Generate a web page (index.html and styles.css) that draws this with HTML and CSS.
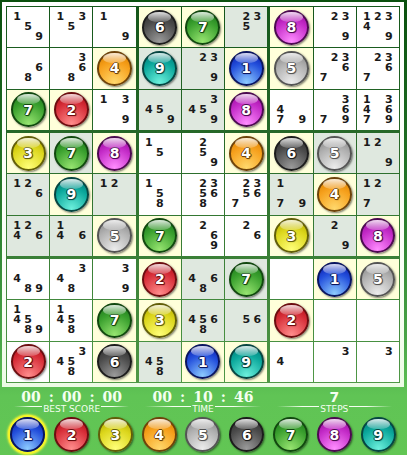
FILE: index.html
```html
<!DOCTYPE html>
<html lang="en">
<head>
<meta charset="utf-8">
<meta name="viewport" content="width=device-width, initial-scale=1">
<title>Sudoku</title>
<link rel="stylesheet" href="styles.css">
</head>
<body>
<main class="game">
  <section class="frame">
    <div class="board" id="board"></div>
  </section>
  <footer class="panel">
    <div class="stats">
      <div class="stat">
        <div class="value"><span>00</span><span>:</span><span>00</span><span>:</span><span>00</span></div>
        <div class="caption">BEST SCORE</div>
      </div>
      <div class="stat">
        <div class="value"><span>00</span><span>:</span><span>10</span><span>:</span><span>46</span></div>
        <div class="caption">TIME</div>
      </div>
      <div class="stat">
        <div class="value plain">7</div>
        <div class="caption">STEPS</div>
      </div>
    </div>
    <div class="picker">
      <button type="button" class="ball n1 selected">1</button>
      <button type="button" class="ball n2">2</button>
      <button type="button" class="ball n3">3</button>
      <button type="button" class="ball n4">4</button>
      <button type="button" class="ball n5">5</button>
      <button type="button" class="ball n6">6</button>
      <button type="button" class="ball n7">7</button>
      <button type="button" class="ball n8">8</button>
      <button type="button" class="ball n9">9</button>
    </div>
  </footer>
</main>
<script src="board.js"></script>
</body>
</html>
```
FILE: board.js
```js
// G = given ball, P = ball placed by the player, digits alone = pencil marks.
const rows = [
  "159 135 19 G6 G7 235 G8 239 12349",
  "68 368 G4 P9 239 G1 G5 2367 2367",
  "G7 G2 139 459 3459 G8 479 3679 134679",
  "G3 P7 G8 15 259 G4 G6 P5 129",
  "126 G9 12 158 23568 23567 179 G4 127",
  "1246 146 G5 G7 269 26 G3 29 G8",
  "489 348 39 G2 468 P7 - G1 G5",
  "14589 1458 G7 G3 4568 56 G2 - -",
  "P2 3458 G6 458 G1 G9 4 3 3"
].map(row => row.split(" "));

const board = document.getElementById("board");

function makeCell(value, shaded) {
  const cell = document.createElement("div");
  cell.className = "cell" + (shaded ? " shaded" : "");
  const kind = value[0];
  if (kind === "G" || kind === "P") {
    const ball = document.createElement("span");
    ball.className = "ball n" + value[1];
    ball.textContent = value[1];
    if (kind === "G") cell.classList.add("given");
    cell.append(ball);
  } else if (kind !== "-") {
    const marks = document.createElement("div");
    marks.className = "marks";
    for (let n = 1; n <= 9; n++) {
      const mark = document.createElement("span");
      if (value.includes(n)) mark.textContent = n;
      marks.append(mark);
    }
    cell.append(marks);
  }
  return cell;
}

for (let b = 0; b < 9; b++) {
  const block = document.createElement("div");
  block.className = "block";
  for (let i = 0; i < 9; i++) {
    const r = Math.floor(b / 3) * 3 + Math.floor(i / 3);
    const c = (b % 3) * 3 + (i % 3);
    block.append(makeCell(rows[r][c], b % 2 === 1));
  }
  board.append(block);
}
```
FILE: styles.css
```css
* {
  box-sizing: border-box;
}

body {
  margin: 0;
  background: #fff;
  font-family: "DejaVu Sans", Verdana, sans-serif;
}

.game {
  display: flex;
  flex-direction: column;
  min-height: 100vh;
  padding: 2px 2px 0;
  border: solid #fff;
  border-width: 0 1px 1px 0;
  background: linear-gradient(#0a500e, #277a2b 45%, #4aa648 75%, #60c455 87%, #62c654);
}

.frame {
  flex: 1;
  display: flex;
  margin-right: 1px;
  padding: 4px;
  background: linear-gradient(#fff, #f8fff4 80%, #ecfbe4);
}

.board {
  flex: 1;
  display: grid;
  grid-template-columns: repeat(3, 1fr);
  grid-template-rows: repeat(3, 1fr);
  gap: 3px;
  padding: 1px;
  background: linear-gradient(#14561a, #2a6c2b 40%, #4f9846);
}

.block {
  display: grid;
  grid-template-columns: repeat(3, 1fr);
  grid-template-rows: repeat(3, 1fr);
  gap: 1px;
}

.cell {
  display: flex;
  align-items: center;
  justify-content: center;
  background: #fff;
}

.shaded {
  background: #dfe8df;
}

.given {
  background: #ffffda;
}

.marks {
  display: grid;
  grid-template-columns: repeat(3, 11px);
  grid-template-rows: repeat(3, 10px);
  font-size: 11px;
  font-weight: bold;
  line-height: 10px;
  text-align: center;
  color: #1a1a1a;
}

.ball {
  --top: #0c22b4;
  --mid: #2450dc;
  --low: #8ccaff;
  --rim: #0a1560;
  position: relative;
  display: flex;
  align-items: center;
  justify-content: center;
  width: 35px;
  height: 35px;
  padding: 0;
  border: 2px solid var(--rim);
  border-radius: 50%;
  background: radial-gradient(circle at 50% 95%, var(--low), var(--mid) 60%, var(--top) 90%);
  box-shadow: 1px 1px 2px rgba(0, 0, 0, 0.5);
  font: bold 14px/18px "DejaVu Sans", Verdana, sans-serif;
  color: #fff;
  text-shadow: 1px 0 var(--rim), -1px 0 var(--rim), 0 1px var(--rim), 0 -1px var(--rim), 1px 1px 1px var(--rim);
}

.ball::before {
  content: "";
  position: absolute;
  top: 0;
  left: 4px;
  right: 4px;
  height: 10px;
  border-radius: 50% 50% 45% 45%;
  background: linear-gradient(rgba(255, 255, 255, 0.85), rgba(255, 255, 255, 0.2));
}

.n2 { --top: #b40f18; --mid: #d8303a; --low: #ff8c8c; --rim: #6c0d10; }
.n3 { --top: #b8b000; --mid: #dcd61c; --low: #ffff78; --rim: #625e08; }
.n4 { --top: #e08400; --mid: #f6a01c; --low: #ffd86c; --rim: #6e430a; }
.n5 { --top: #8c8c8c; --mid: #b0b0b0; --low: #ececec; --rim: #545454; }
.n6 { --top: #303030; --mid: #4c4c4c; --low: #9a9a9a; --rim: #1c1c1c; }
.n7 { --top: #1e7c1c; --mid: #3aa02e; --low: #96e470; --rim: #11480f; }
.n8 { --top: #a00ca4; --mid: #c42cc8; --low: #ff8cff; --rim: #4c0a50; }
.n9 { --top: #00807c; --mid: #0ca89c; --low: #6cf0dc; --rim: #064642; }

.panel {
  padding: 3px 5px 3px 4px;
}

.stats {
  display: grid;
  grid-template-columns: repeat(3, 1fr);
  color: #f4fff0;
}

.stat {
  padding: 0 8px;
}

.value {
  display: flex;
  justify-content: center;
  gap: 8px;
  font: bold 14px/15px "DejaVu Serif", serif;
}

.plain {
  font-family: "DejaVu Sans", Verdana, sans-serif;
}

.caption {
  display: flex;
  gap: 1px;
  font-size: 9px;
  line-height: 8px;
}

.caption::before,
.caption::after {
  content: "";
  flex: 1;
  height: 1px;
  margin-top: 1px;
  background: linear-gradient(to right, transparent, #f4fff0 60%);
}

.caption::after {
  background: linear-gradient(to left, transparent, #f4fff0 60%);
}

.picker {
  display: grid;
  grid-template-columns: repeat(9, 1fr);
  justify-items: center;
  margin-top: 4px;
}

.selected {
  box-shadow: 0 0 0 2px #f4f428, 0 0 2px 3px #e4f03c;
}
```
